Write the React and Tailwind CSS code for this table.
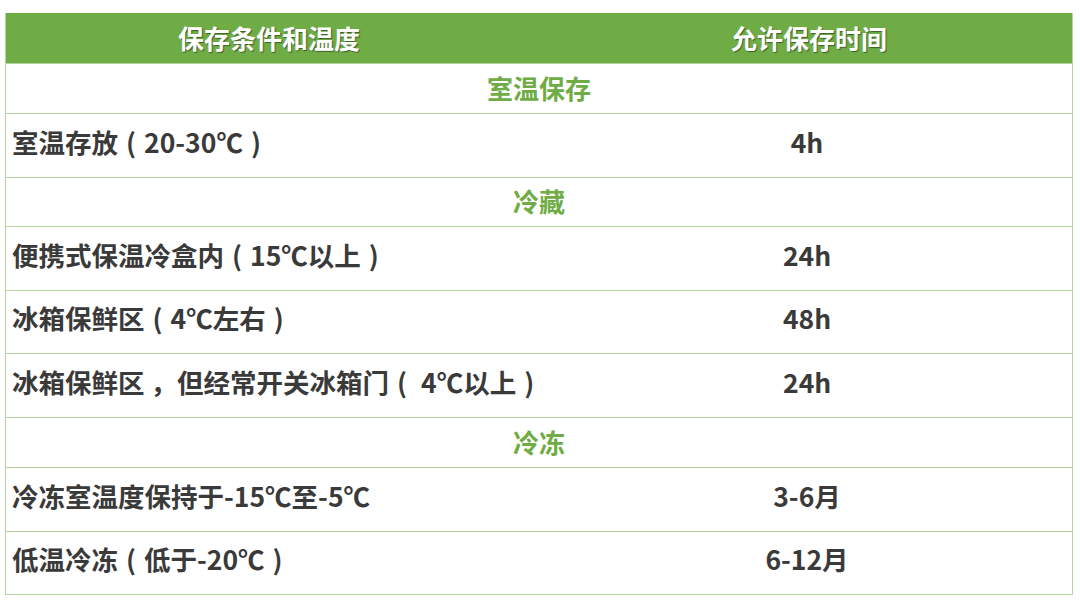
const ROWS = [
  { type: "section", label: "室温保存", h: "h-[50px]" },
  { label: "室温存放（20-30℃）", time: "4h", h: "h-[64px]" },
  { type: "section", label: "冷藏", h: "h-[49px]" },
  { label: "便携式保温冷盒内（15℃以上）", time: "24h", h: "h-[64px]" },
  { label: "冰箱保鲜区（4℃左右）", time: "48h", h: "h-[63px]" },
  { label: "冰箱保鲜区 ，但经常开关冰箱门（ 4℃以上）", time: "24h", h: "h-[64px]" },
  { type: "section", label: "冷冻", h: "h-[50px]" },
  { label: "冷冻室温度保持于-15℃至-5℃", time: "3-6月", h: "h-[64px]" },
  { label: "低温冷冻（低于-20℃）", time: "6-12月", h: "h-[63px]" },
];

// full-width parens drawn centred in their em box, like the source font
function Label({ text }) {
  return text.split(/([（）])/).map((part, i) => {
    if (part === "（") return <span key={i} className="mx-[8px]">(</span>;
    if (part === "）") return <span key={i} className="mx-[8px]">)</span>;
    return <span key={i} className="whitespace-pre">{part}</span>;
  });
}

export default function App() {
  return (
    <div className="h-[608px] w-[1080px] bg-white pt-[13px] pl-[5px] font-['Noto_Sans_CJK_SC','Noto_Sans',sans-serif]">
      <div className="w-[1068px] border-x border-b border-[#b4d49e]">
        {/* header */}
        <div className="flex h-[50px] bg-[#6fac46] text-[26px] font-bold text-white [text-shadow:1px_1px_1px_rgba(0,0,0,0.45)]">
          <div className="flex flex-1 items-center justify-center pb-[2px] pr-[14px]">保存条件和温度</div>
          <div className="flex flex-1 items-center justify-center pb-[2px]">允许保存时间</div>
        </div>

        {ROWS.map((r, i) =>
          r.type === "section" ? (
            <div
              key={i}
              className={`flex items-center justify-center border-t border-[#b4d49e] pb-[3px] text-[26px] font-bold text-[#6fac46] ${r.h}`}
            >
              {r.label}
            </div>
          ) : (
            <div
              key={i}
              className={`flex border-t border-[#b4d49e] text-[26.5px] font-bold text-[#3a3a3a] ${r.h}`}
            >
              <div className="flex flex-1 items-center whitespace-nowrap pb-[8px] pl-[6px]">
                <Label text={r.label} />
              </div>
              <div className="flex flex-1 items-center justify-center pb-[8px]">
                {r.time}
              </div>
            </div>
          )
        )}
      </div>
    </div>
  );
}
